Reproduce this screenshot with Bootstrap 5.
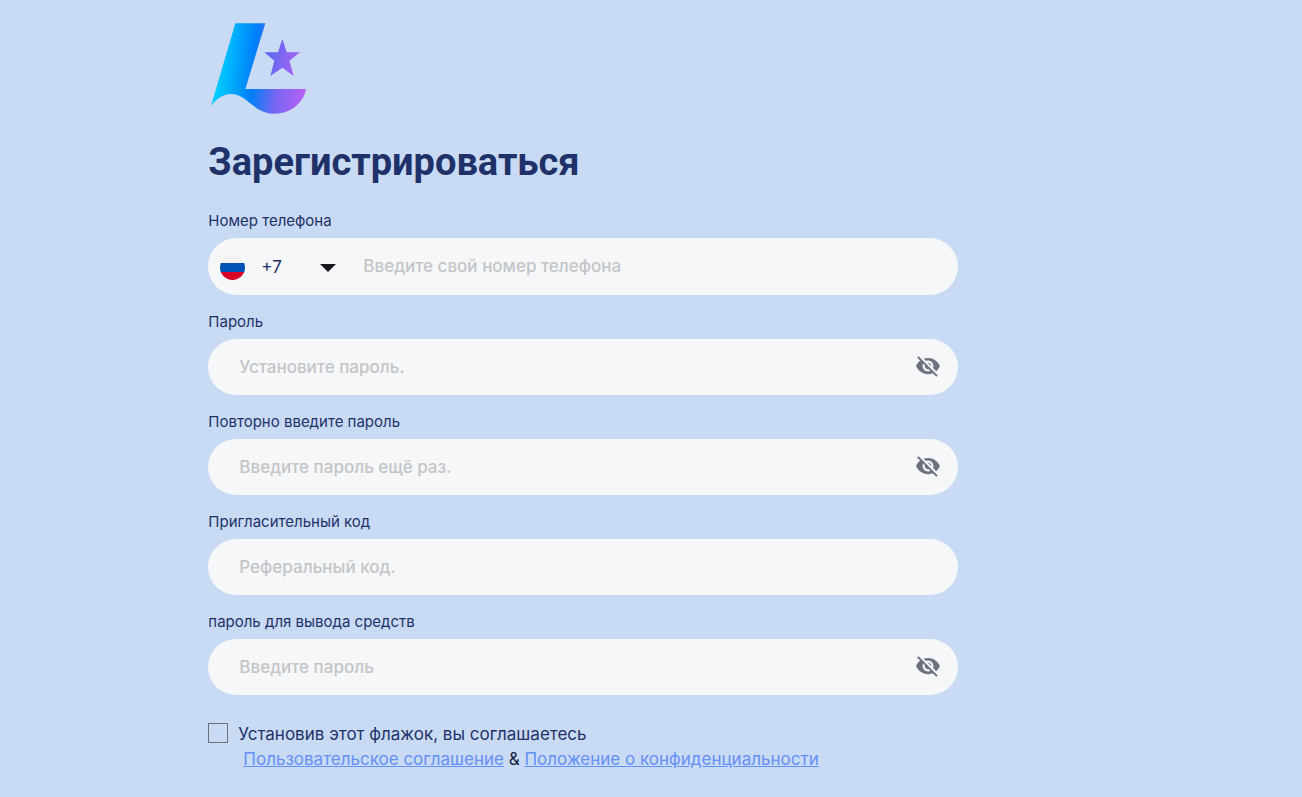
<!DOCTYPE html>
<html lang="ru">
<head>
<meta charset="utf-8">
<meta name="viewport" content="width=device-width, initial-scale=1">
<title>Зарегистрироваться</title>
<link href="https://cdn.jsdelivr.net/npm/bootstrap@5.3.0/dist/css/bootstrap.min.css" rel="stylesheet">
<style>
body { background: #c9daf4; color: #1e3269; font-family: Inter, "Liberation Sans", sans-serif; }
.signup { margin-left: 16%; padding-top: 21px; padding-bottom: 24px; max-width: 750px; }
.logo { width: 100px; height: 95px; }
h1 { font: 700 38px/46px Roboto, "Liberation Sans", sans-serif; margin: 23px 0 24px; }
.form-label { font-size: 15px; line-height: 24px; margin-bottom: 5px; }
.field { height: 56px; background: #f5f7f9; margin-bottom: 15px; }
.field-phone { height: 57px; }
.field .form-control { font-size: 17px; font-weight: 500; color: #1e3269; padding: 2px 0 0 31px; }
.field .form-control::placeholder { color: #c3c5c8; opacity: 1; }
.field-phone .form-control { padding-top: 0; }
.dial { width: 128px; padding: 2px 0 0 12px; font-size: 17px; color: #1e3269; flex: none; }
.dial .flag { margin-right: 16px; }
.field .gap-phone { padding-left: 27px; }
.eye { width: 60px; padding: 0 0 2px; color: #6e7180; flex: none; }
.agree { margin-top: 27px; font-size: 17px; line-height: 25px; }
.agree .form-check-input { width: 20px; height: 20px; margin: 1px 10px 0 0; background-color: transparent; border: 1px solid #6c7078; border-radius: 0; }
.agree a { color: #6590f6; }
.links { padding-left: 35px; color: #14213f; }
</style>
</head>
<body>
<svg class="d-none" aria-hidden="true">
  <symbol id="eye-off" viewBox="0 0 24 24">
    <path fill="currentColor" d="M12 7c2.76 0 5 2.24 5 5 0 .65-.13 1.26-.36 1.83l2.92 2.92c1.51-1.26 2.7-2.89 3.43-4.75-1.73-4.39-6-7.5-11-7.5-1.4 0-2.74.25-3.98.7l2.16 2.16C10.74 7.13 11.35 7 12 7zM2 4.27l2.28 2.28.46.46C3.08 8.3 1.78 10.02 1 12c1.73 4.39 6 7.5 11 7.5 1.55 0 3.03-.3 4.38-.84l.42.42L19.73 22 21 20.73 3.27 3 2 4.27zM7.53 9.8l1.55 1.55c-.05.21-.08.43-.08.65 0 1.66 1.34 3 3 3 .22 0 .44-.03.65-.08l1.55 1.55c-.67.33-1.41.53-2.2.53-2.76 0-5-2.24-5-5 0-.79.2-1.53.53-2.2zm4.31-.78l3.15 3.15.02-.16c0-1.66-1.34-3-3-3l-.17.01z"/>
  </symbol>
</svg>
<main class="signup">
  <svg class="logo d-block" viewBox="24 33 300 285" role="img" aria-label="Логотип">
    <defs><linearGradient id="sky" gradientUnits="userSpaceOnUse" x1="50" y1="210" x2="310" y2="235">
      <stop offset="0" stop-color="#00ceff"/><stop offset=".4" stop-color="#0080fa"/><stop offset=".48" stop-color="#1d78f6"/><stop offset=".68" stop-color="#7467f3"/><stop offset="1" stop-color="#b260f4"/>
    </linearGradient>
    <linearGradient id="starfill" gradientUnits="userSpaceOnUse" x1="190" y1="120" x2="300" y2="150"><stop stop-color="#4e6bef"/><stop offset="1" stop-color="#ab62f4"/></linearGradient></defs>
    <path fill="url(#sky)" d="M106 40H196L136 237H318C312 275 275 311 225 311C160 311 142 252 93 252C68 252 48 268 33 288Z"/>
    <path fill="url(#starfill)" d="M247 86L260 127H300L268 152L281 198L247 173L211 198L223 152L193 127H234Z"/>
  </svg>
  <h1>Зарегистрироваться</h1>
  <form>
    <label class="form-label d-block" for="phone">Номер телефона</label>
    <div class="field field-phone d-flex align-items-stretch rounded-pill">
      <button type="button" class="dial btn border-0 d-flex align-items-center" aria-label="Код страны +7">
        <svg class="flag" width="25" height="25" viewBox="0 0 25 25"><clipPath id="disc"><circle cx="12.5" cy="12.5" r="12.5"/></clipPath><g clip-path="url(#disc)"><path fill="#f0f0f0" d="M0 0h25v8H0z"/><path fill="#0052b4" d="M0 8h25v9H0z"/><path fill="#d80027" d="M0 17h25v8H0z"/></g></svg>
        <span>+7</span>
        <svg class="ms-auto flex-shrink-0" width="16" height="8" viewBox="0 0 16 8"><path fill="#17191f" d="M0 0h16L8 8z"/></svg>
      </button>
      <input class="form-control gap-phone border-0 bg-transparent shadow-none" id="phone" type="tel" placeholder="Введите свой номер телефона">
    </div>
    <label class="form-label d-block" for="pass">Пароль</label>
    <div class="field d-flex rounded-pill">
      <input class="form-control border-0 bg-transparent shadow-none" id="pass" type="password" placeholder="Установите пароль.">
      <button type="button" class="eye btn border-0" aria-label="Показать пароль"><svg width="26" height="26"><use href="#eye-off"/></svg></button>
    </div>
    <label class="form-label d-block" for="repeat">Повторно введите пароль</label>
    <div class="field d-flex rounded-pill">
      <input class="form-control border-0 bg-transparent shadow-none" id="repeat" type="password" placeholder="Введите пароль ещё раз.">
      <button type="button" class="eye btn border-0" aria-label="Показать пароль"><svg width="26" height="26"><use href="#eye-off"/></svg></button>
    </div>
    <label class="form-label d-block" for="code">Пригласительный код</label>
    <div class="field d-flex rounded-pill">
      <input class="form-control border-0 bg-transparent shadow-none" id="code" type="text" placeholder="Реферальный код.">
    </div>
    <label class="form-label d-block" for="withdraw">пароль для вывода средств</label>
    <div class="field d-flex rounded-pill">
      <input class="form-control border-0 bg-transparent shadow-none" id="withdraw" type="password" placeholder="Введите пароль">
      <button type="button" class="eye btn border-0" aria-label="Показать пароль"><svg width="26" height="26"><use href="#eye-off"/></svg></button>
    </div>
    <div class="agree">
      <div class="d-flex"><input class="form-check-input flex-shrink-0" type="checkbox" id="agree"><label for="agree">Установив этот флажок, вы соглашаетесь</label></div>
      <div class="links"><a href="#terms">Пользовательское соглашение</a> &amp; <a href="#privacy">Положение о конфиденциальности</a></div>
    </div>
  </form>
</main>
<script src="https://cdn.jsdelivr.net/npm/bootstrap@5.3.0/dist/js/bootstrap.bundle.min.js"></script>
</body>
</html>
